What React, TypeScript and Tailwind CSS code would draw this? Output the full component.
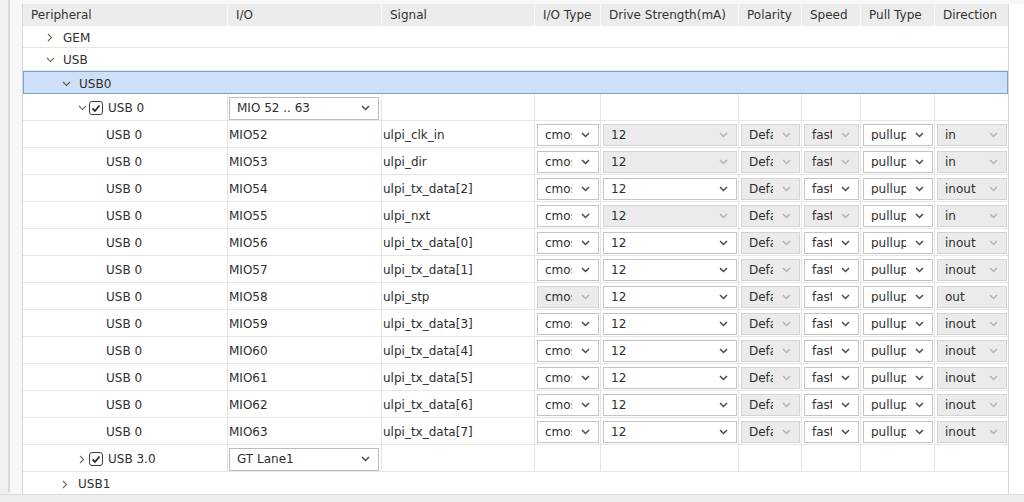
import React from 'react';

const cols = [205, 154, 153, 66, 138, 63, 59, 74, 73];
const headers = ['Peripheral', 'I/O', 'Signal', 'I/O Type', 'Drive Strength(mA)', 'Polarity', 'Speed', 'Pull Type', 'Direction'];

const pins = [
  { pin: 'MIO52', sig: 'ulpi_clk_in', dir: 'in' },
  { pin: 'MIO53', sig: 'ulpi_dir', dir: 'in' },
  { pin: 'MIO54', sig: 'ulpi_tx_data[2]', dir: 'inout' },
  { pin: 'MIO55', sig: 'ulpi_nxt', dir: 'in' },
  { pin: 'MIO56', sig: 'ulpi_tx_data[0]', dir: 'inout' },
  { pin: 'MIO57', sig: 'ulpi_tx_data[1]', dir: 'inout' },
  { pin: 'MIO58', sig: 'ulpi_stp', dir: 'out' },
  { pin: 'MIO59', sig: 'ulpi_tx_data[3]', dir: 'inout' },
  { pin: 'MIO60', sig: 'ulpi_tx_data[4]', dir: 'inout' },
  { pin: 'MIO61', sig: 'ulpi_tx_data[5]', dir: 'inout' },
  { pin: 'MIO62', sig: 'ulpi_tx_data[6]', dir: 'inout' },
  { pin: 'MIO63', sig: 'ulpi_tx_data[7]', dir: 'inout' },
];

const ComboChevron = () => (
  <svg width="9" height="6" viewBox="0 0 9 6">
    <path d="M1 1l3.5 3.5L8 1" fill="none" stroke="currentColor" strokeWidth="1.5" />
  </svg>
);

const TreeRight = () => (
  <svg width="6" height="9" viewBox="0 0 6 9">
    <path d="M1 1l3.5 3.5L1 8" fill="none" stroke="currentColor" strokeWidth="1.1" />
  </svg>
);

const TreeDown = () => (
  <svg width="9" height="6" viewBox="0 0 9 6">
    <path d="M1 1l3.5 3.5L8 1" fill="none" stroke="currentColor" strokeWidth="1.1" />
  </svg>
);

const Checkbox = () => (
  <div className="w-[14px] h-[14px] rounded-[3px] border border-[#3c3c3c] bg-white flex items-center justify-center">
    <svg width="10" height="9" viewBox="0 0 10 9">
      <path d="M1.5 4.5l2.5 2.5L8.5 1.5" fill="none" stroke="#2a2a2a" strokeWidth="1.8" />
    </svg>
  </div>
);

const Combo = ({ text, enabled }: { text: string; enabled: boolean }) => (
  <div
    className={`h-[22px] w-full flex items-center border ${
      enabled ? 'bg-white border-[#c4c4c4]' : 'bg-[#ebebeb] border-[#d4d4d4]'
    }`}
  >
    <span className="flex-1 min-w-0 overflow-hidden whitespace-nowrap pl-[7px] leading-none">{text}</span>
    <span className={`w-[26px] shrink-0 flex justify-center ${enabled ? 'text-[#4a4a4a]' : 'text-[#b4b4b4]'}`}>
      <ComboChevron />
    </span>
  </div>
);

const Cell = ({ i, children, className = '' }: { i: number; children?: React.ReactNode; className?: string }) => (
  <div
    style={{ width: cols[i] }}
    className={`h-full shrink-0 flex items-center ${i < cols.length - 1 ? 'border-r border-[#e4e4e4]' : ''} ${className}`}
  >
    {children}
  </div>
);

const GridRow = ({ first, io, rest }: { first: React.ReactNode; io?: React.ReactNode; rest?: React.ReactNode[] }) => (
  <div className="h-[27px] shrink-0 flex border-b border-[#e6e6e6]">
    <Cell i={0} className="pt-[2px]">{first}</Cell>
    <Cell i={1} className="pt-[2px]">{io}</Cell>
    {[2, 3, 4, 5, 6, 7, 8].map((c, k) => (
      <Cell key={c} i={c} className={c > 2 ? 'pl-[2px] pr-[1px] pt-[2px]' : 'pl-[1px] pt-[2px]'}>
        {rest ? rest[k] : null}
      </Cell>
    ))}
  </div>
);

export default function App() {
  return (
    <div className="w-[1024px] h-[502px] bg-[#eeeeee] overflow-hidden font-['DejaVu_Sans',sans-serif] text-[12px] text-[#2e2e2e]">
      <div className="flex h-[495px] border-b border-[#dcdcdc]">
        <div className="w-[8px] bg-[#f0f0f0]" />
        <div className="w-[2px] bg-[#d9d9d9] h-[492px]" />
        <div className="flex-1 bg-[#f7f7f7] pl-[12px] pt-[4px] flex">
          <div className="w-[987px] bg-white border-l border-r border-[#d8d8d8] flex flex-col">
            {/* header */}
            <div className="h-[22px] flex bg-[#ececec] shrink-0">
              {headers.map((h, i) => (
                <div
                  key={h}
                  style={{ width: cols[i] }}
                  className={`shrink-0 flex items-center pl-[8px] whitespace-nowrap text-[#333] ${
                    i < cols.length - 1 ? 'border-r border-[#f8f8f8]' : ''
                  }`}
                >
                  {h}
                </div>
              ))}
            </div>

            {/* GEM */}
            <div className="h-[22px] shrink-0 flex items-center border-b border-[#e6e6e6] pl-[20px] pt-[2px]">
              <span className="w-[14px] flex justify-center text-[#6a6a6a]"><TreeRight /></span>
              <span className="ml-[6px]">GEM</span>
            </div>
            {/* USB */}
            <div className="h-[23px] shrink-0 flex items-center border-b border-[#e6e6e6] pl-[20px] pt-[2px]">
              <span className="w-[14px] flex justify-center text-[#6a6a6a]"><TreeDown /></span>
              <span className="ml-[6px]">USB</span>
            </div>
            {/* USB0 selected */}
            <div className="h-[23px] shrink-0 flex items-center bg-[#cde0f7] border border-[#76a3d6] pl-[35px] pt-[2px]">
              <span className="w-[14px] flex justify-center text-[#5a5a5a]"><TreeDown /></span>
              <span className="ml-[6px]">USB0</span>
            </div>

            {/* USB 0 controller */}
            <GridRow
              first={
                <div className="flex items-center pl-[52px]">
                  <span className="w-[14px] flex justify-center text-[#6a6a6a]"><TreeDown /></span>
                  <Checkbox />
                  <span className="ml-[5px]">USB 0</span>
                </div>
              }
              io={
                <div className="w-full pl-[1px] pr-[2px]">
                  <div className="h-[23px] flex items-center border border-[#bdbdbd] bg-white">
                    <span className="flex-1 pl-[7px]">MIO 52 .. 63</span>
                    <span className="w-[26px] flex justify-center text-[#4a4a4a]"><ComboChevron /></span>
                  </div>
                </div>
              }
            />

            {pins.map((p) => {
              const notIn = p.dir !== 'in';
              return (
                <GridRow
                  key={p.pin}
                  first={<span className="pl-[83px]">USB 0</span>}
                  io={<span className="pl-[1px]">{p.pin}</span>}
                  rest={[
                    <span key="s">{p.sig}</span>,
                    <Combo key="t" text="cmos" enabled={p.dir !== 'out'} />,
                    <Combo key="d" text="12" enabled={notIn} />,
                    <Combo key="p" text="Default" enabled={false} />,
                    <Combo key="sp" text="fast" enabled={notIn} />,
                    <Combo key="pu" text="pullup" enabled={true} />,
                    <Combo key="dr" text={p.dir} enabled={false} />,
                  ]}
                />
              );
            })}

            {/* USB 3.0 */}
            <GridRow
              first={
                <div className="flex items-center pl-[52px]">
                  <span className="w-[14px] flex justify-center text-[#6a6a6a]"><TreeRight /></span>
                  <Checkbox />
                  <span className="ml-[5px]">USB 3.0</span>
                </div>
              }
              io={
                <div className="w-full pl-[1px] pr-[2px]">
                  <div className="h-[23px] flex items-center border border-[#bdbdbd] bg-white">
                    <span className="flex-1 pl-[7px]">GT Lane1</span>
                    <span className="w-[26px] flex justify-center text-[#4a4a4a]"><ComboChevron /></span>
                  </div>
                </div>
              }
            />

            {/* USB1 */}
            <div className="h-[22px] shrink-0 flex items-center pl-[35px] pt-[2px]">
              <span className="w-[14px] flex justify-center text-[#6a6a6a]"><TreeRight /></span>
              <span className="ml-[6px]">USB1</span>
            </div>
          </div>
          <div className="flex-1 bg-white" />
        </div>
      </div>
    </div>
  );
}
